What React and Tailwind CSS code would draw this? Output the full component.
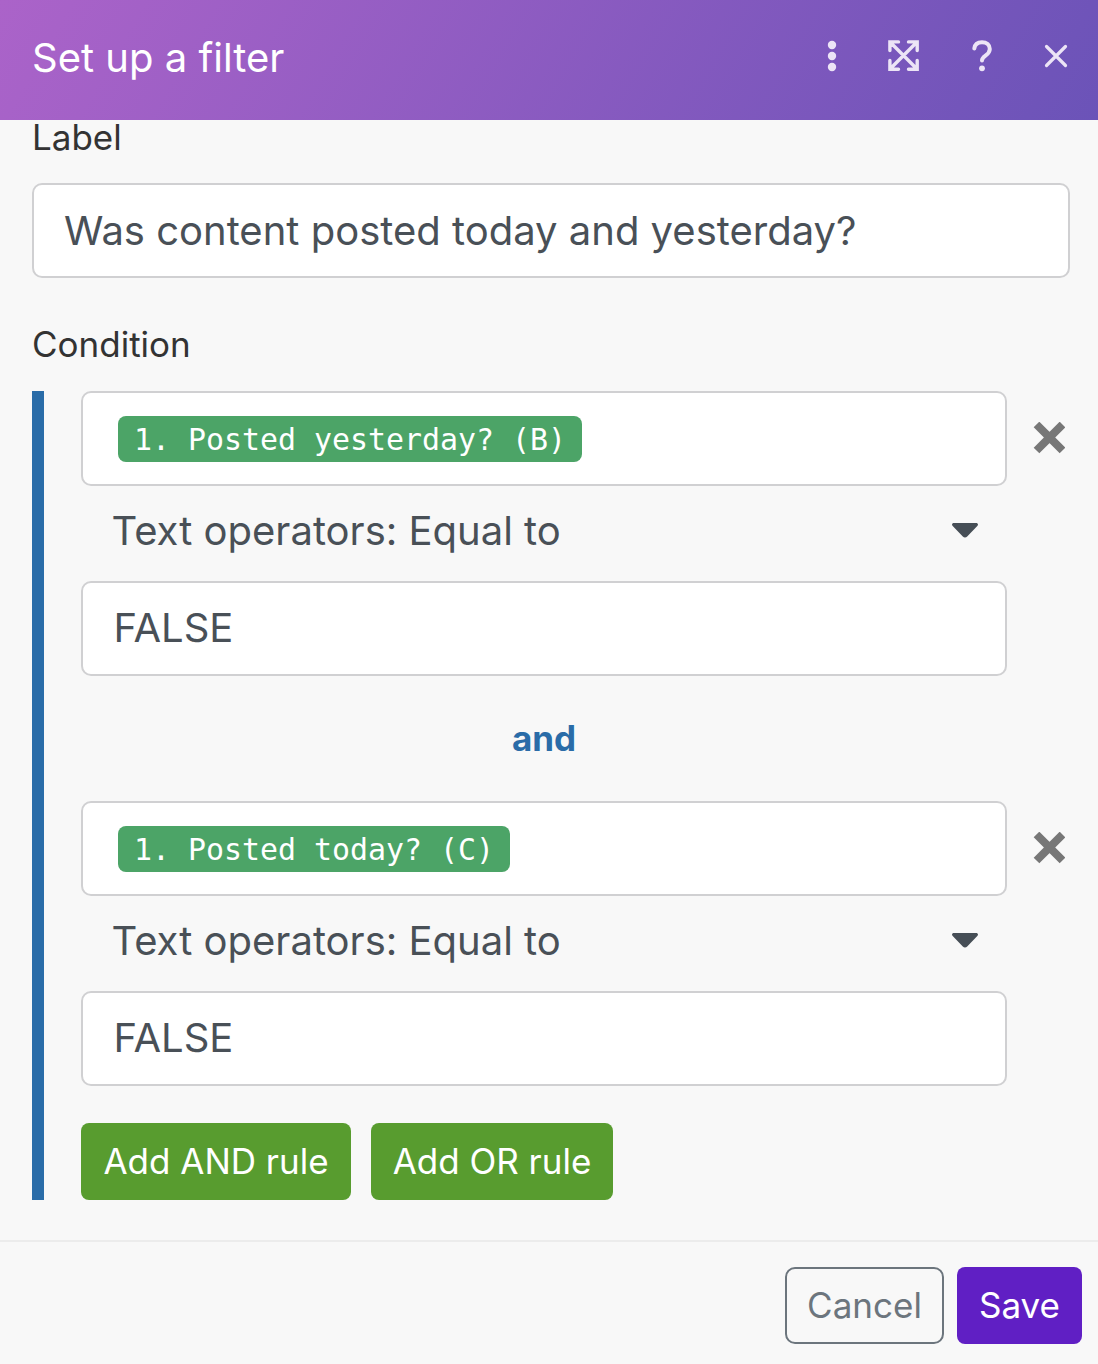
import React from "react";

function Rule({ label }) {
  return (
    <div className="flex">
      <div className="w-[926px] shrink-0">
        <div className="flex h-[95px] items-center rounded-[10px] border-2 border-[#d0d0d2] bg-white pl-[35px]">
          <span className="flex h-[46px] items-center rounded-lg bg-[#4ca467] px-4 pt-0.5 font-['DejaVu_Sans_Mono',monospace] text-[29.9px] leading-none whitespace-pre text-white">
            {label}
          </span>
        </div>
        <div className="flex h-[95px] items-center justify-between pr-[29px] pb-1.5 pl-[30.500px] text-[40px]">
          <span>Text operators: Equal to</span>
          <svg width="26" height="16" viewBox="0 0 26 16" fill="#464e56">
            <path d="M2 0h22c2 0 2.600 1.700 1.300 3L15.200 13.500c-1.300 1.400-3.100 1.400-4.400 0L.7 3C-.6 1.700 0 0 2 0z" />
          </svg>
        </div>
        <div className="flex h-[95px] items-center rounded-[10px] border-2 border-[#d0d0d2] bg-white pb-0.5 pl-[30.500px] text-[40px]">
          FALSE
        </div>
      </div>
      <svg className="mt-[31px] ml-[26px]" width="32" height="32" viewBox="0 0 32 32" stroke="#777" strokeWidth="8">
        <path d="M3.500 2.500l26 26M29.500 2.500l-26 26" />
      </svg>
    </div>
  );
}

export default function App() {
  return (
    <div className="flex h-[1364px] w-[1098px] flex-col bg-[#f8f8f8] font-['Inter',sans-serif] text-[#495057]">
      <header className="flex h-[120px] shrink-0 items-center justify-between bg-[linear-gradient(120deg,#ab63c9,#6b53b8)] pr-[30px] pb-1 pl-8 text-white">
        <h1 className="text-[40px]">Set up a filter</h1>
        <div className="flex items-center pb-1 text-[#ece4f6]">
          <svg width="10" height="32" viewBox="0 0 10 32" fill="currentColor">
            <circle cx="5" cy="5" r="4.200" />
            <circle cx="5" cy="16" r="4.200" />
            <circle cx="5" cy="27" r="4.200" />
          </svg>
          <svg className="ml-[51px]" width="32" height="32" viewBox="0 0 32 32" fill="none" stroke="currentColor" strokeWidth="3.400" strokeLinecap="round" strokeLinejoin="miter">
            <path d="M1.900 10.500V1.900h8.600M20.500 1.900h8.700v8.600M29.200 20.500v8.700h-8.700M10.500 29.200H1.900v-8.700M2.500 2.500l26 26M28.500 2.500l-26 26" />
          </svg>
          <svg className="ml-[52px]" width="20" height="32" viewBox="0 0 20 32" fill="none" stroke="currentColor" strokeWidth="4" strokeLinecap="round">
            <path d="M2.300 8.500C2.800 4.500 5.600 2.200 10 2.200c4.600 0 7.800 2.800 7.800 6.800 0 3-1.500 4.700-4.300 6.700C11 17.500 10 18.500 10 20.500" />
            <circle cx="10" cy="28.300" r="2.900" fill="currentColor" stroke="none" />
          </svg>
          <svg className="ml-[52px]" width="24" height="32" viewBox="0 0 24 32" fill="none" stroke="currentColor" strokeWidth="3.200" strokeLinecap="round">
            <path d="M2.500 6.500l19 19M21.500 6.500l-19 19" />
          </svg>
        </div>
      </header>
      <main className="h-[1120px] shrink-0 px-8">
        <div className="h-[63px] text-[35px] leading-[35px] text-[#333]">Label</div>
        <div className="flex h-[95px] w-[1038px] items-center rounded-[10px] border-2 border-[#d0d0d2] bg-white pl-[30px] text-[40px]">
          Was content posted today and yesterday?
        </div>
        <div className="mt-[47px] h-[66px] text-[35px] leading-[38px] text-[#333]">Condition</div>
        <div className="h-[809px] border-l-[12px] border-[#2a6ca8] pl-[37px]">
          <Rule label="1. Posted yesterday? (B)" />
          <div className="flex h-[125px] w-[926px] items-center justify-center text-[35px] font-bold text-[#2a6ca8]">and</div>
          <Rule label="1. Posted today? (C)" />
          <div className="mt-[37px] flex gap-5 text-[35px] text-white">
            <button className="h-[77px] w-[270px] rounded-lg bg-[#589c2f]">Add AND rule</button>
            <button className="h-[77px] w-[242px] rounded-lg bg-[#589c2f]">Add OR rule</button>
          </div>
        </div>
      </main>
      <footer className="flex h-[124px] shrink-0 justify-end gap-[13px] border-t-2 border-[#ececec] pt-[25px] pr-4 text-[35px]">
        <button className="h-[77px] w-[159px] rounded-[10px] border-2 border-[#6c757d] text-[#6c757d]">Cancel</button>
        <button className="h-[77px] w-[125px] rounded-lg bg-[#601fc4] text-white">Save</button>
      </footer>
    </div>
  );
}
